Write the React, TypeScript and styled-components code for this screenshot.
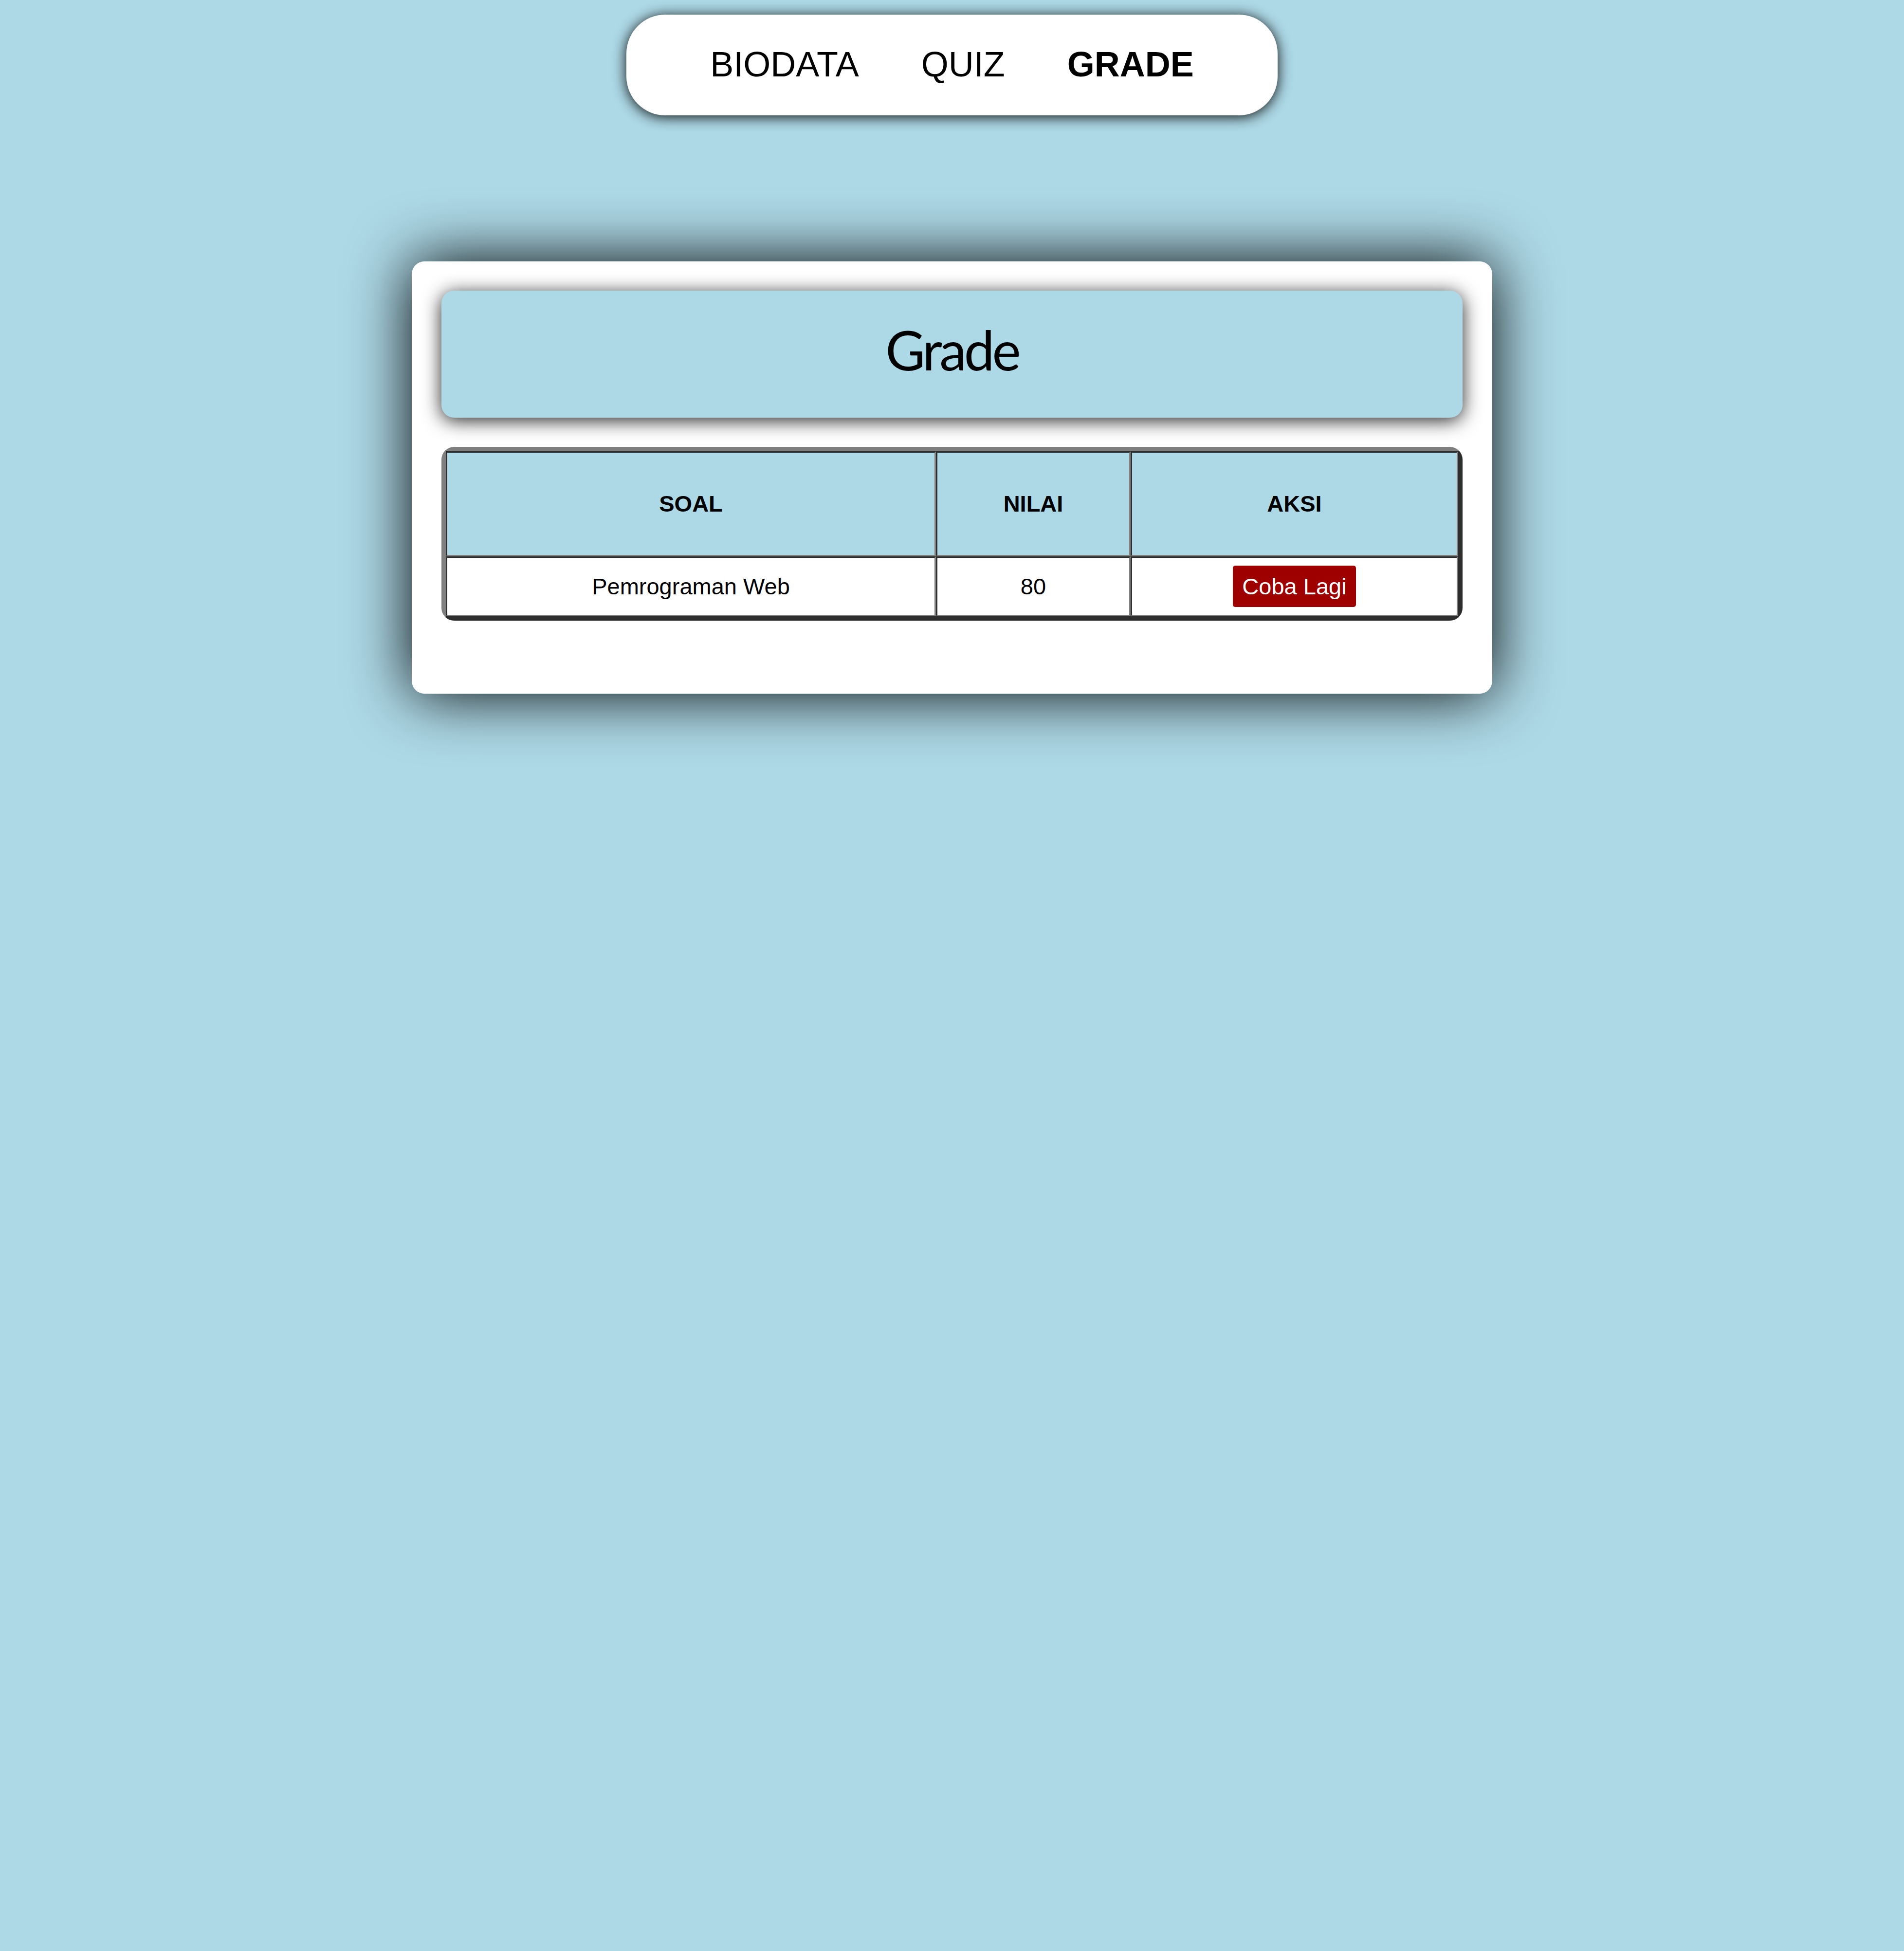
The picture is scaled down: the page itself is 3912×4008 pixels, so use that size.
import React from "react";
import styled, { createGlobalStyle } from "styled-components";

const GlobalStyle = createGlobalStyle`
  * {
    box-sizing: border-box;
  }

  html,
  body {
    margin: 0;
    padding: 0;
    background: #add8e6;
    font-family: "Liberation Sans", Arial, sans-serif;
    color: #000;
  }

  body {
    min-height: 4008px;
  }
`;

const Page = styled.div`
  display: flex;
  flex-direction: column;
  align-items: center;
  padding-top: 30px;
`;

const Nav = styled.nav`
  width: 1338px;
  height: 207px;
  background: #fff;
  border-radius: 80px;
  box-shadow: 0 3px 28px rgba(0, 0, 0, 0.95);
  display: flex;
  align-items: center;
  justify-content: center;
  gap: 128px;
  padding-bottom: 4px;
`;

const NavLink = styled.a<{ $active?: boolean }>`
  font-size: 72px;
  line-height: 80px;
  color: #000;
  text-decoration: none;
  font-weight: ${({ $active }) => ($active ? 700 : 400)};
  cursor: pointer;
`;

const Card = styled.section`
  margin-top: 300px;
  width: 2220px;
  padding: 60px 61px 150px;
  background: #fff;
  border-radius: 26px;
  box-shadow: 0 0 128px #000;
`;

const TitleBox = styled.div`
  height: 261px;
  background: #add8e6;
  border-radius: 26px;
  box-shadow: 0 6px 38px rgba(0, 0, 0, 0.85);
  display: flex;
  align-items: center;
  justify-content: center;
  padding-bottom: 20px;
`;

const Title = styled.h1`
  margin: 0;
  font-family: Lato, "Noto Sans", sans-serif;
  font-weight: 400;
  font-size: 112px;
  letter-spacing: -5px;
  line-height: 1;
`;

const GradeTable = styled.table`
  margin-top: 60px;
  width: 100%;
  table-layout: fixed;
  border-collapse: separate;
  border-spacing: 0;
  border: 9px solid;
  border-color: #808080 #2d2d2d #2d2d2d #808080;
  border-radius: 26px;
  font-size: 47px;
`;

const HeadCell = styled.th<{ $w?: number }>`
  width: ${({ $w }) => ($w ? `${$w}px` : "auto")};
  background: #add8e6;
  padding: 78px 10px;
  line-height: 54px;
  font-weight: 700;
  text-align: center;
  border: 3px solid;
  border-color: #2d2d2d #808080 #808080 #2d2d2d;
`;

const Cell = styled.td`
  background: #fff;
  padding: 16px 10px;
  line-height: 53px;
  text-align: center;
  border: 3px solid;
  border-color: #2d2d2d #808080 #808080 #2d2d2d;
`;

const RetryButton = styled.button`
  font-family: "Liberation Sans", Arial, sans-serif;
  font-size: 47px;
  line-height: 53px;
  padding: 16px 19px;
  background: #9e0000;
  color: #fff;
  border: none;
  border-radius: 5px;
  cursor: pointer;
  vertical-align: middle;
`;

const grades = [{ soal: "Pemrograman Web", nilai: 80 }];

const App = () => {
  return (
    <>
      <GlobalStyle />
      <Page>
        <Nav>
          <NavLink>BIODATA</NavLink>
          <NavLink>QUIZ</NavLink>
          <NavLink $active>GRADE</NavLink>
        </Nav>

        <Card>
          <TitleBox>
            <Title>Grade</Title>
          </TitleBox>

          <GradeTable>
            <thead>
              <tr>
                <HeadCell $w={1007}>SOAL</HeadCell>
                <HeadCell $w={400}>NILAI</HeadCell>
                <HeadCell>AKSI</HeadCell>
              </tr>
            </thead>
            <tbody>
              {grades.map((g) => (
                <tr key={g.soal}>
                  <Cell>{g.soal}</Cell>
                  <Cell>{g.nilai}</Cell>
                  <Cell>
                    <RetryButton>Coba Lagi</RetryButton>
                  </Cell>
                </tr>
              ))}
            </tbody>
          </GradeTable>
        </Card>
      </Page>
    </>
  );
};

export default App;
